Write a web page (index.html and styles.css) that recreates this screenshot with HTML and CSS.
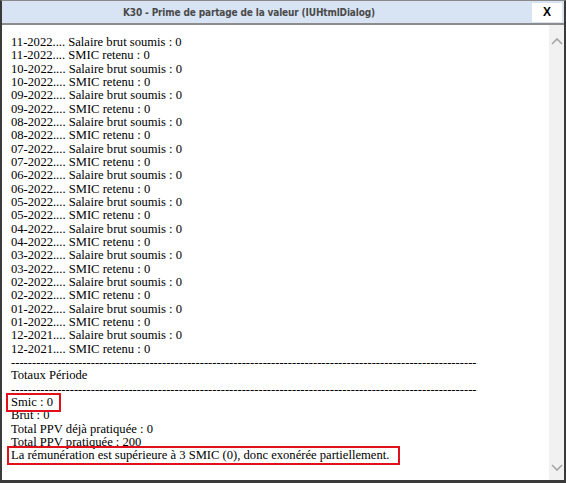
FILE: index.html
```html
<!DOCTYPE html>
<html lang="fr">
<head>
<meta charset="utf-8">
<title>K30 - Prime de partage de la valeur</title>
<link rel="stylesheet" href="styles.css">
</head>
<body>
<div class="window">
  <div class="titlebar">
    <div class="title">K30 - Prime de partage de la valeur (IUHtmlDialog)</div>
    <div class="close">X</div>
  </div>
  <div class="body">
    <div class="text">
      <div>11-2022.... Salaire brut soumis : 0</div>
      <div>11-2022.... SMIC retenu : 0</div>
      <div>10-2022.... Salaire brut soumis : 0</div>
      <div>10-2022.... SMIC retenu : 0</div>
      <div>09-2022.... Salaire brut soumis : 0</div>
      <div>09-2022.... SMIC retenu : 0</div>
      <div>08-2022.... Salaire brut soumis : 0</div>
      <div>08-2022.... SMIC retenu : 0</div>
      <div>07-2022.... Salaire brut soumis : 0</div>
      <div>07-2022.... SMIC retenu : 0</div>
      <div>06-2022.... Salaire brut soumis : 0</div>
      <div>06-2022.... SMIC retenu : 0</div>
      <div>05-2022.... Salaire brut soumis : 0</div>
      <div>05-2022.... SMIC retenu : 0</div>
      <div>04-2022.... Salaire brut soumis : 0</div>
      <div>04-2022.... SMIC retenu : 0</div>
      <div>03-2022.... Salaire brut soumis : 0</div>
      <div>03-2022.... SMIC retenu : 0</div>
      <div>02-2022.... Salaire brut soumis : 0</div>
      <div>02-2022.... SMIC retenu : 0</div>
      <div>01-2022.... Salaire brut soumis : 0</div>
      <div>01-2022.... SMIC retenu : 0</div>
      <div>12-2021.... Salaire brut soumis : 0</div>
      <div>12-2021.... SMIC retenu : 0</div>
      <div class="dashes">---------------------------------------------------------------------------------------------------------------</div>
      <div>Totaux Période</div>
      <div class="dashes">---------------------------------------------------------------------------------------------------------------</div>
      <div><span class="mark mark-smic">Smic : 0</span></div>
      <div>Brut : 0</div>
      <div>Total PPV déjà pratiquée : 0</div>
      <div>Total PPV pratiquée : 200</div>
      <div><span class="mark mark-msg">La rémunération est supérieure à 3 SMIC (0), donc exonérée partiellement.</span></div>
    </div>
    <div class="scrollbar">
      <svg class="arrow" width="12" height="8" viewBox="0 0 12 8"><polyline points="1,7 6,2 11,7" fill="none" stroke="#a6a6a6" stroke-width="1.6"/></svg>
      <svg class="arrow" width="12" height="8" viewBox="0 0 12 8"><polyline points="1,1 6,6 11,1" fill="none" stroke="#a6a6a6" stroke-width="1.6"/></svg>
    </div>
  </div>
</div>
</body>
</html>
```
FILE: styles.css
```css
html, body {
  margin: 0;
  padding: 0;
  background: #ffffff;
}
.window {
  width: 566px;
  height: 483px;
  box-sizing: border-box;
  border-left: 2px solid #3a3a3a;
  border-right: 2px solid #3a3a3a;
  border-bottom: 3px solid #3a3a3a;
  border-top: 1px solid #8a8a8a;
  display: flex;
  flex-direction: column;
  background: #ffffff;
}
.titlebar {
  height: 22px;
  background: #d8e4f3;
  border-bottom: 2px solid #8c8c8c;
  display: flex;
  align-items: center;
  flex-shrink: 0;
}
.title {
  flex: 1;
  padding-right: 36px;
  text-align: center;
  font-family: "DejaVu Sans Condensed", "DejaVu Sans", sans-serif;
  font-weight: bold;
  font-size: 10px;
  letter-spacing: -0.15px;
  color: #4a4a4a;
}
.close {
  width: 30px;
  height: 19px;
  margin-right: 2px;
  background: #ffffff;
  display: flex;
  align-items: center;
  justify-content: center;
  font-family: "Liberation Sans", Arial, sans-serif;
  font-weight: bold;
  font-size: 12px;
  color: #000;
}
.body {
  flex: 1;
  display: flex;
  min-height: 0;
}
.text {
  flex: 1;
  padding: 11px 0 0 9px;
  font-family: "Liberation Serif", "Times New Roman", serif;
  font-size: 12.6px;
  line-height: 13.33px;
  color: #000;
  overflow: hidden;
  white-space: nowrap;
}
.mark {
  position: relative;
}
.mark::after {
  content: "";
  position: absolute;
  border: 2px solid #e2101a;
  pointer-events: none;
}
.mark-smic::after {
  left: -5px;
  right: -8px;
  top: -2px;
  bottom: -3px;
}
.mark-msg::after {
  left: -4px;
  right: -11px;
  top: -2px;
  bottom: -3px;
}
.scrollbar {
  width: 15px;
  background: #f1f1f1;
  display: flex;
  flex-direction: column;
  justify-content: space-between;
  align-items: center;
  padding: 12px 0 8px;
  box-sizing: border-box;
}
```
